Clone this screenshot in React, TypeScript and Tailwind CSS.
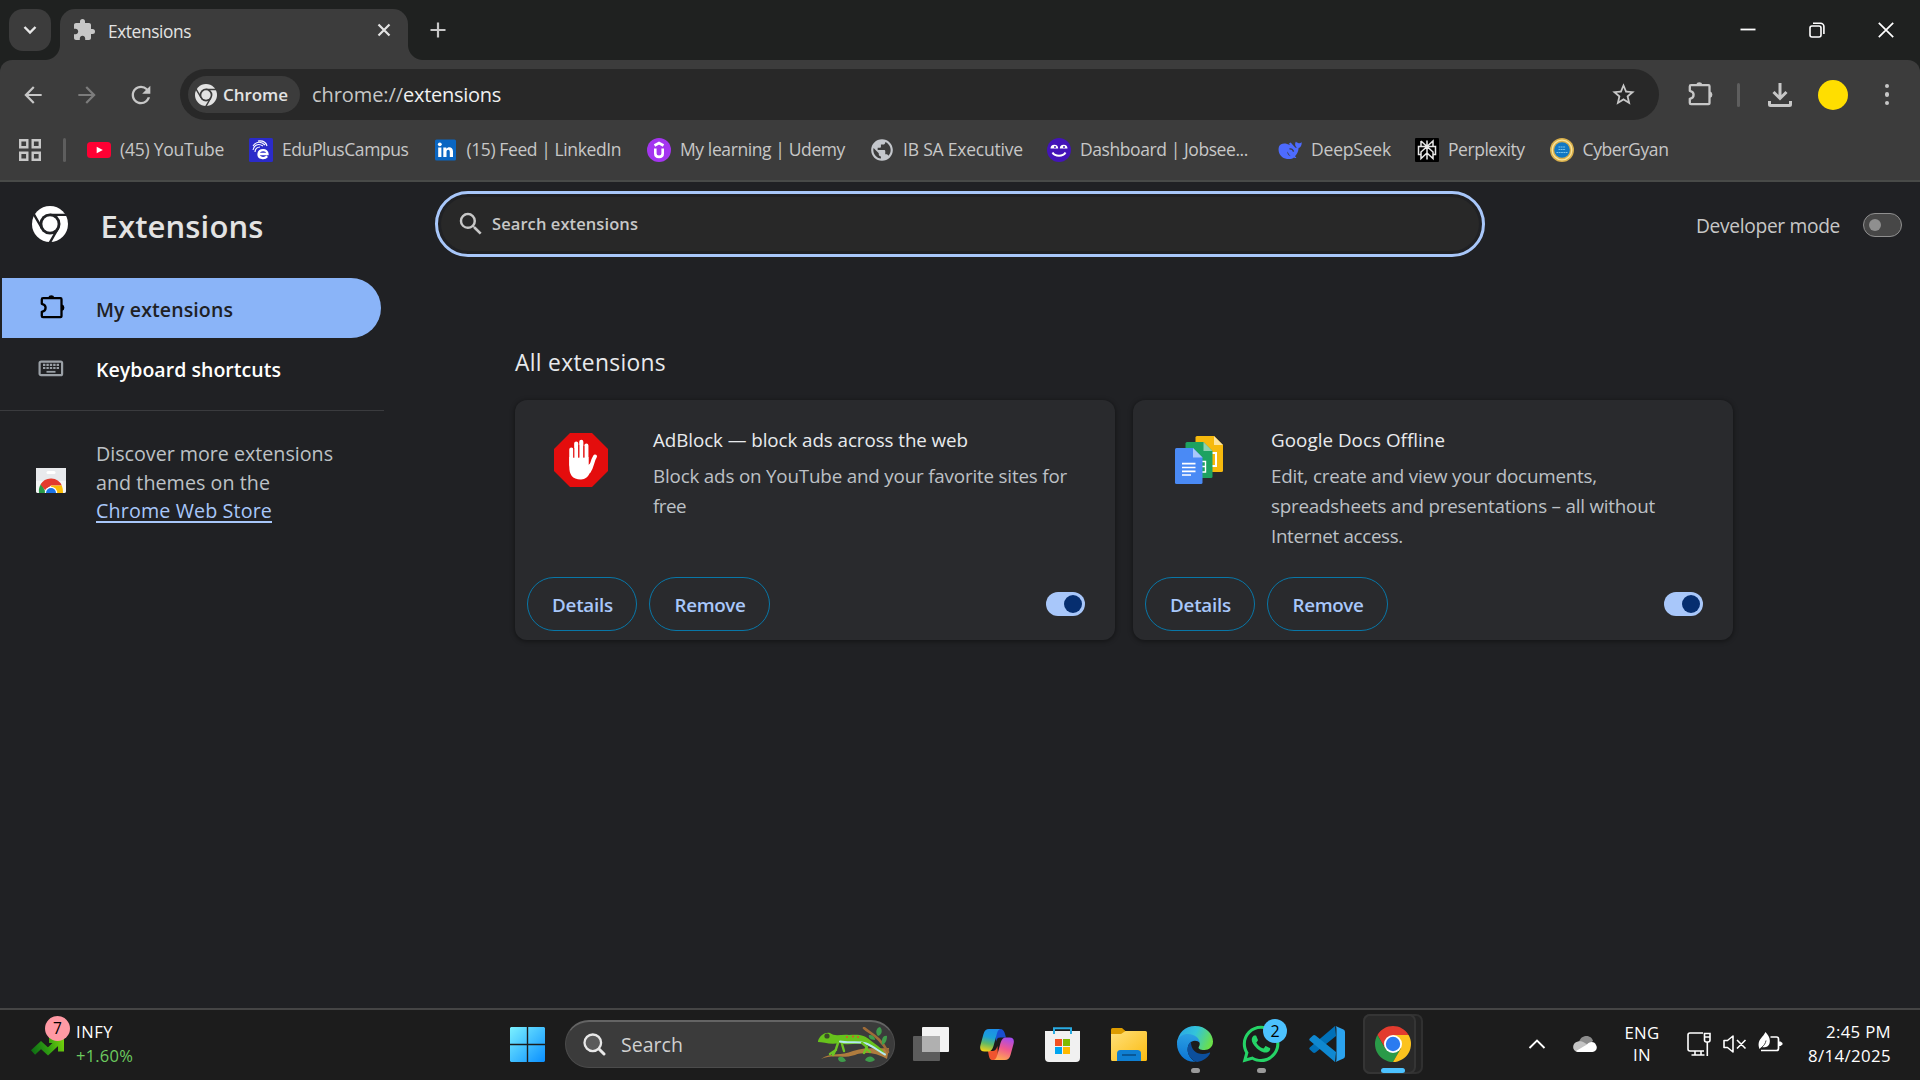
import { useLayoutEffect, useRef } from "react";
import type { ReactNode } from "react";
import { MdArrowBack, MdArrowForward, MdExtension, MdPublic, MdRefresh, MdSearch, MdStarBorder } from "react-icons/md";
import { FaWhatsapp } from "react-icons/fa";

/* A single line of text whose tracking is evened out to fill the given width. */
function Label({ w, className = "", children }: { w: number; className?: string; children: ReactNode }) {
  const box = useRef<HTMLSpanElement>(null);
  useLayoutEffect(() => {
    const el = box.current;
    if (!el) return;
    el.style.letterSpacing = "0px";
    const count = (el.textContent ?? "").length;
    const natural = el.getBoundingClientRect().width;
    if (count) el.style.letterSpacing = `${(w - natural) / count}px`;
  }, [w, children]);
  return (
    <span ref={box} className={`inline-block shrink-0 whitespace-pre ${className}`}>
      {children}
    </span>
  );
}

function PuzzleOutline({ className = "" }: { className?: string }) {
  return (
    <svg viewBox="0 0 25 25" className={className} fill="none">
      <path
        d="M3 4.200h17.500a1 1 0 0 1 1 1v17a1 1 0 0 1-1 1H3a1.200 1.200 0 0 1-1.200-1.200v-4.200c2.600-.5 3.800-2 3.800-4s-1.200-3.500-3.800-4V5.400A1.200 1.200 0 0 1 3 4.200z"
        stroke="currentColor"
        strokeWidth="2.300"
        strokeLinejoin="round"
      />
      <path d="M8.200 3.600a3.200 3.200 0 0 1 6.200 0zM22 10.600a3.200 3.200 0 0 1 0 6.200z" fill="currentColor" />
    </svg>
  );
}

/* One-colour Chrome mark; the cut colour is the surface behind it. */
function ChromeMono({ cut, className = "" }: { cut: string; className?: string }) {
  return (
    <svg viewBox="0 0 48 48" className={className}>
      <circle cx="24" cy="24" r="24" fill="currentColor" />
      <path d="M24 11.800H48M13.400 30L1.400 9.300M34.600 30L22.500 51" stroke={cut} strokeWidth="3.200" />
      <circle cx="24" cy="24" r="14" fill={cut} />
      <circle cx="24" cy="24" r="10.200" fill="currentColor" />
    </svg>
  );
}

function ChromeColor({ className = "" }: { className?: string }) {
  return (
    <svg viewBox="0 0 48 48" className={className}>
      <path fill="#e33b2e" d="M3.220 12A24 24 0 0 1 44.780 12H24L13.600 30z" />
      <path fill="#2a9a48" d="M3.220 12L13.600 30L24 36L34.390 30L24 48A24 24 0 0 1 3.220 12z" />
      <path fill="#fcc31e" d="M24 12H44.780A24 24 0 0 1 24 48L34.390 30L24 24z" />
      <circle cx="24" cy="24" r="12" fill="#fff" />
      <circle cx="24" cy="24" r="9.600" fill="#2b7bf0" />
    </svg>
  );
}

function TitleBar() {
  return (
    <div className="flex h-[60px] items-end bg-[#1f2120]">
      <button className="mb-[9px] ml-[9px] flex size-[42px] items-center justify-center rounded-[14px] bg-[#3c3c3c]">
        <svg viewBox="0 0 14 10" className="h-[10px] w-[14px]" fill="none" stroke="#e8e8e8" strokeWidth="2.400">
          <path d="M1.500 2L7 7.500L12.500 2" />
        </svg>
      </button>
      <span className="-ml-[6px] size-[15px] bg-[radial-gradient(circle_at_0_0,transparent_14.500px,#3c3c3c_15.500px)]" />
      <div className="flex h-[51px] w-[348px] items-center rounded-t-[15px] bg-[#3c3c3c] pr-[17px] pb-[9px] pl-[12px]">
        <MdExtension className="size-[24px] text-[#c7c7c7]" />
        <Label w={83} className="mt-[4px] ml-[12px] text-[17.300px] leading-[24px] text-[#e3e3e3]">Extensions</Label>
        <svg viewBox="0 0 14 14" className="ml-auto size-[14px]" fill="none" stroke="#e3e3e3" strokeWidth="2.200">
          <path d="M1.500 1.500L12.500 12.500M12.500 1.500L1.500 12.500" />
        </svg>
      </div>
      <span className="size-[15px] bg-[radial-gradient(circle_at_100%_0,transparent_14.500px,#3c3c3c_15.500px)]" />
      <svg viewBox="0 0 16 16" className="mb-[22px] ml-[7px] size-[16px]" stroke="#c7c7c7" strokeWidth="2.200">
        <path d="M8 0.500V15.500M0.500 8H15.500" />
      </svg>
      <div className="mb-[22px] ml-auto flex items-center gap-[53px] pr-[26.500px] text-white">
        <svg viewBox="0 0 16 16" className="size-[16px]" stroke="currentColor" strokeWidth="1.800">
          <path d="M0.500 7.500H15.500" />
        </svg>
        <svg viewBox="0 0 16 16" className="size-[16px]" fill="none" stroke="currentColor" strokeWidth="1.600">
          <rect x="1" y="4" width="11" height="11" rx="2" />
          <path d="M4 1.200H11.500A3.400 3.400 0 0 1 14.900 4.600V12" />
        </svg>
        <svg viewBox="0 0 16 16" className="size-[16px]" stroke="currentColor" strokeWidth="1.700">
          <path d="M0.800 0.800L15.200 15.200M15.200 0.800L0.800 15.200" />
        </svg>
      </div>
    </div>
  );
}

function Toolbar() {
  return (
    <div className="flex h-[69px] items-center rounded-t-[12px] bg-[#3c3c3c] text-[#c7c7c7]">
      <MdArrowBack className="ml-[20px] size-[26px]" />
      <MdArrowForward className="ml-[28px] size-[26px] text-[#7c7c7c]" />
      <MdRefresh className="ml-[27px] size-[28px]" />
      <div className="ml-[25px] flex h-[51px] w-[1479px] items-center rounded-full bg-[#282828] pr-[22.500px] pl-[8px]">
        <div className="flex h-[37px] w-[112px] items-center rounded-full bg-[#3c3c3c] pl-[7px] text-[#e3e3e3]">
          <ChromeMono cut="#3c3c3c" className="size-[22px]" />
          <Label w={65} className="ml-[6px] text-[17px] leading-[24px] font-semibold">Chrome</Label>
        </div>
        <Label w={91} className="ml-[12px] text-[20px] leading-[26px]">chrome://</Label>
        <Label w={98} className="text-[20px] leading-[26px] text-[#f0f0f0]">extensions</Label>
        <MdStarBorder className="ml-auto size-[27px]" />
      </div>
      <PuzzleOutline className="-mt-[2px] ml-[29px] size-[25px]" />
      <span className="ml-[24px] h-[24px] w-[3px] rounded bg-[#5e5e5e]" />
      <svg viewBox="0 0 24 24" className="ml-[28px] size-[24px]" fill="none" stroke="currentColor" strokeWidth="3">
        <path d="M12 0V14M5.500 9L12 15.500L18.500 9M1.500 18V21.500Q1.500 22.500 2.500 22.500H21.500Q22.500 22.500 22.500 21.500V18" />
      </svg>
      <span className="ml-[26px] size-[30px] rounded-full bg-[#ffde00]" />
      <div className="ml-[36.500px] flex flex-col gap-[4px]">
        <span className="size-[4.500px] rounded-full bg-[#c7c7c7]" />
        <span className="size-[4.500px] rounded-full bg-[#c7c7c7]" />
        <span className="size-[4.500px] rounded-full bg-[#c7c7c7]" />
      </div>
    </div>
  );
}

const bookmarks: { icon: ReactNode; text: string; w: number; gap: string }[] = [
  {
    text: "(45) YouTube",
    w: 104,
    gap: "ml-[21px]",
    icon: (
      <svg viewBox="0 0 24 24">
        <rect y="4" width="24" height="16" rx="3.500" fill="#ff0033" />
        <path d="M9.700 8.800L15.800 12L9.700 15.200z" fill="#fff" />
      </svg>
    ),
  },
  {
    text: "EduPlusCampus",
    w: 126.5,
    gap: "ml-[25px]",
    icon: (
      <svg viewBox="0 0 24 24" fill="none" stroke="#fff">
        <rect width="24" height="24" rx="1.500" fill="#2b2bc9" stroke="none" />
        <path d="M9.500 16H18.500C18.500 10.800 10 10.800 9.500 16C9.300 20.500 15.500 21.300 18.200 18.300" strokeWidth="2.300" />
        <path d="M4 12C5 7 9 5 14 8M4 8C7 3.500 12 3 16 7M9 3C13 2.500 17 4 18 8M6 14C6 11 8 9 11 9" strokeWidth="1.100" />
      </svg>
    ),
  },
  {
    text: "(15) Feed | LinkedIn",
    w: 154.5,
    gap: "ml-[25px]",
    icon: (
      <svg viewBox="0 0 24 24" fill="#fff">
        <rect x="1" y="1.500" width="21" height="21" rx="1.500" fill="#0a66c2" />
        <path d="M4.200 9.400H7.400V19H4.200zM9.300 9.400H12.300V10.800C14 8.300 19 8.600 19 13.300V19H15.800V14C15.800 11 12.500 11.300 12.500 14V19H9.300z" />
        <circle cx="5.800" cy="6.300" r="1.900" />
      </svg>
    ),
  },
  {
    text: "My learning | Udemy",
    w: 165,
    gap: "ml-[26px]",
    icon: (
      <svg viewBox="0 0 24 24" fill="none" stroke="#fff" strokeWidth="2.600">
        <circle cx="12" cy="12" r="12" fill="#a435f0" stroke="none" />
        <path d="M8.300 10.500V15.500C8.300 20 15.700 20 15.700 15.500V10.500M7.500 7.500L12 5L16.500 7.500" />
      </svg>
    ),
  },
  { text: "IB SA Executive", w: 120, gap: "ml-[25px]", icon: <MdPublic className="-m-px size-[26px] text-[#c4c7cc]" /> },
  {
    text: "Dashboard | Jobsee...",
    w: 168,
    gap: "ml-[24px]",
    icon: (
      <svg viewBox="0 0 24 24">
        <circle cx="12" cy="12" r="12" fill="#4314b8" />
        <path d="M3.500 10.500A3.800 3.800 0 0 1 11.200 10.500zM12.800 10.500A3.800 3.800 0 0 1 20.500 10.500z" fill="#fff" />
        <circle cx="8" cy="9" r="1" fill="#4314b8" />
        <circle cx="17" cy="9" r="1" fill="#4314b8" />
        <path d="M5.500 14.500C8 18.800 16 18.800 18.500 14.500" fill="none" stroke="#fff" strokeWidth="2" />
      </svg>
    ),
  },
  {
    text: "DeepSeek",
    w: 80,
    gap: "ml-[30px]",
    icon: (
      <svg viewBox="0 0 24 24" fill="#4d6bfe">
        <path d="M23.700 4.300C22.300 5.200 21 5.400 20.200 4.900C19.600 4.600 18.400 4.700 18 3.600C16.500 5.600 17 8 18.700 9.300C18.300 10 17.800 10.100 17 9.300C15.500 7.800 13.800 6 12.600 4.600L11 5.400L12 7C7.500 4.500 2.500 4.800 1 8.500C-.8 14.500 3 20.300 9 21C12 21.400 14.500 20.700 16 19.500C17.500 20.400 18.800 20.200 18 19.200L17 18.300C19.500 15.800 20.400 13 20.600 10C22.600 9.300 23.800 7.200 23.700 4.300z" />
        <path d="M9 13.500C10.500 14.500 11 17 12.800 18.300C10.500 18 9.500 16.300 9 13.500z" fill="#3c3c3c" opacity="0.800" />
        <path d="M11.500 11.200C13 10.200 15 11.500 15.500 13.700" fill="none" stroke="#3c3c3c" strokeWidth="1.400" />
      </svg>
    ),
  },
  {
    text: "Perplexity",
    w: 76.5,
    gap: "ml-[24px]",
    icon: (
      <svg viewBox="0 0 24 24" fill="none">
        <rect width="24" height="24" rx="1" fill="#000" />
        <path
          d="M12 2.500V21.500M6 3V8.500H18V3L12 8.500L6 3M3.500 8.500H12L6 14V20.500L12 15V8.500L18 14V20.500L12 15M6 16.500H3.500V8.500H20.500V16.500H18"
          stroke="#e8e8e8"
          strokeWidth="1.500"
        />
      </svg>
    ),
  },
  {
    text: "CyberGyan",
    w: 86,
    gap: "ml-[25px]",
    icon: (
      <svg viewBox="0 0 24 24" fill="none">
        <circle cx="12" cy="12" r="12" fill="#d9b04c" />
        <circle cx="12" cy="12" r="9.800" stroke="#fbe49a" strokeWidth="1.300" />
        <circle cx="12" cy="12" r="7.800" fill="#1278c4" />
        <path d="M8.500 9H15.500M8.500 11.500H15.500M6.500 14.500H17.500" stroke="#79c4ec" strokeWidth="1.200" strokeDasharray="1.800 .5" />
      </svg>
    ),
  },
];

function BookmarksBar() {
  return (
    <div className="flex h-[53px] items-center border-b-2 border-[#484a48] bg-[#3c3c3c] pb-[9px]">
      <svg viewBox="0 0 22 22" className="ml-[19px] size-[22px]" fill="none" stroke="#c7c7c7" strokeWidth="2.400">
        <path d="M1.200 1.200H8.300V8.300H1.200zM13.700 1.200H20.800V8.300H13.700zM1.200 13.700H8.300V20.800H1.200zM13.700 13.700H20.800V20.800H13.700z" />
      </svg>
      <span className="ml-[22px] h-[24px] w-[3px] rounded bg-[#5e5e5e]" />
      {bookmarks.map((b) => (
        <div key={b.text} className={`flex items-center ${b.gap}`}>
          <span className="size-[24px] shrink-0">{b.icon}</span>
          <Label w={b.w} className="-mt-[2px] ml-[9px] text-[17.500px] leading-[24px] text-[#c7c7c7]">{b.text}</Label>
        </div>
      ))}
    </div>
  );
}

function Sidebar() {
  return (
    <nav className="w-[384px] shrink-0">
      <a className="ml-[2px] flex h-[60px] w-[379px] items-center rounded-r-full bg-[#8ab4f8] pl-[38px]">
        <PuzzleOutline className="-mt-[4px] size-[25px] text-black" />
        <Label w={137} className="mt-[4px] ml-[31px] text-[19.500px] leading-[28px] font-semibold text-[#202124]">My extensions</Label>
      </a>
      <a className="flex h-[60px] items-center pl-[38px]">
        <svg viewBox="0 0 26 17" className="h-[17px] w-[26px]" fill="none" stroke="#9aa0a6">
          <rect x="1.600" y="1.600" width="22.500" height="13.600" rx="1.500" strokeWidth="2.200" />
          <path d="M5 4.800H21M5 8H21" strokeWidth="2.200" strokeDasharray="2.400 1" />
          <path d="M8.500 11.800H17.500" strokeWidth="1.800" />
        </svg>
        <Label w={185} className="mt-[4px] ml-[32px] text-[19.500px] leading-[28px] font-semibold text-white">Keyboard shortcuts</Label>
      </a>
      <div className="mt-[12px] h-px bg-[#3a3b3e]" />
      <div className="mt-[29px] flex pl-[36px]">
        <svg viewBox="0 0 30 25" className="mt-[28px] h-[25px] w-[30px]">
          <path d="M0 0H30V23Q30 25 28 25H2Q0 25 0 23z" fill="#e8eaed" />
          <path d="M0 13H30V23Q30 25 28 25H2Q0 25 0 23z" fill="#f4f5f6" />
          <rect x="10.500" y="3" width="9" height="3" rx="1.500" fill="#fff" />
          <path d="M3 25A12 12 0 0 1 5.500 15.500L10 25z" fill="#2a9a48" />
          <path d="M4.500 16.500A12 12 0 0 1 25.800 17.500H15L9 22z" fill="#e33b2e" />
          <path d="M15 17.500H25.800Q27.200 21 27 25H15z" fill="#fbbc04" />
          <path d="M8.800 25A6.200 6.200 0 0 1 21.200 25z" fill="#fff" />
          <path d="M10 25A5 5 0 0 1 20 25z" fill="#1a73e8" />
        </svg>
        <p className="ml-[30px] flex flex-col items-start text-[19.700px] leading-[28.600px] text-[#bdc1c6]">
          <Label w={237}>Discover more extensions</Label>
          <Label w={174}>and themes on the</Label>
          <Label w={176} className="text-[#a8c7fa] underline decoration-2 underline-offset-[3px]">Chrome Web Store</Label>
        </p>
      </div>
    </nav>
  );
}

function AdBlockIcon() {
  return (
    <svg viewBox="0 0 54 54" className="size-[54px]">
      <path d="M16 0H38L54 16V38L38 54H16L0 38V16z" fill="#e40d0d" />
      <g stroke="#fff" strokeLinecap="round" fill="none">
        <path d="M17.300 16.500V32M22.200 10.500V30M27.300 8.800V30M32.400 12.500V32" strokeWidth="4.100" />
        <path d="M41 23.500C38 28 38.500 33 35 38" strokeWidth="4" />
      </g>
      <path d="M15.300 24H34.500V32L39.500 27C38.500 34 36 46.500 27 46.500C18 46.500 15.300 41 15.300 34z" fill="#fff" />
      <path d="M19.800 15V25M24.800 12V25M29.900 13V25" stroke="#e40d0d" strokeWidth="0.900" />
    </svg>
  );
}

function DocsIcon() {
  return (
    <svg viewBox="0 0 48 48" className="size-[48px]">
      <path d="M22 0H39L48 9V34.500Q48 36 46.500 36H20.500V1.500Q20.500 0 22 0z" fill="#f6b90d" />
      <path d="M39 0L48 9H39z" fill="#fde39b" />
      <path d="M36 17H41V30H36" fill="none" stroke="#fff" strokeWidth="2" />
      <path d="M12 6H28.500L37.500 15V40.500Q37.500 42 36 42H10.500V7.500Q10.500 6 12 6z" fill="#1da261" />
      <path d="M28.500 6L37.500 15H28.500z" fill="#8ed1b0" />
      <path d="M24 25.500H30.500V36H24M24 30.500H30.500" fill="none" stroke="#fff" strokeWidth="1.400" />
      <path d="M1.500 12H18L27.500 21.500V46.500Q27.500 48 26 48H1.500Q0 48 0 46.500V13.500Q0 12 1.500 12z" fill="#4a8af5" />
      <path d="M18 12L27.500 21.500H18z" fill="#a9c8fb" />
      <path d="M7 27.700H20.500M7 31.500H20.500M7 35.300H20.500M7 39H16" stroke="#fff" strokeWidth="1.700" />
    </svg>
  );
}

function Card({ icon, title, lines }: { icon: ReactNode; title: [string, number]; lines: [string, number][] }) {
  return (
    <article className="flex h-[240px] w-[600px] flex-col rounded-[12px] bg-[#292a2d] shadow-[0_1px_4px_1px_rgba(0,0,0,0.35)]">
      <div className="flex h-[177px] pt-[25px]">
        <div className="flex w-[138px] justify-center pt-[8px] pr-[6px]">{icon}</div>
        <div className="flex flex-col items-start text-[18.800px] leading-[30px] text-[#bdc1c6]">
          <Label w={title[1]} className="mb-[6px] text-[#e8eaed]">{title[0]}</Label>
          {lines.map(([text, w]) => (
            <Label key={text} w={w}>{text}</Label>
          ))}
        </div>
      </div>
      <div className="flex items-center pr-[30px] pl-[12px] text-[18.800px] leading-[28px] font-semibold text-[#a8c7fa]">
        <button className="flex h-[54px] w-[110px] items-center justify-center rounded-full border border-[#0877a8] pt-px pl-px">
          <Label w={61}>Details</Label>
        </button>
        <button className="ml-[12px] flex h-[54px] w-[121px] items-center justify-center rounded-full border border-[#0877a8] pt-px pl-px">
          <Label w={71}>Remove</Label>
        </button>
        <span className="ml-auto flex h-[24px] w-[39px] items-center justify-end rounded-full bg-[#a8c7fa] pr-[3px]">
          <span className="size-[18px] rounded-full bg-[#062e6f]" />
        </span>
      </div>
    </article>
  );
}

function Page() {
  return (
    <main className="flex flex-1 flex-col bg-[#202124]">
      <header className="flex h-[96px] items-start">
        <ChromeMono cut="#202124" className="mt-[24px] ml-[32px] size-[36px] text-white" />
        <h1 className="mt-[24px] ml-[32.500px] w-[334.500px] text-[31px] leading-[40px] font-semibold text-[#e3e3e3]">
          <Label w={163}>Extensions</Label>
        </h1>
        <div className="mt-[9px] h-[66px] w-[1050px] rounded-full border-[3px] border-[#a8c7fa] p-[3px]">
          <div className="flex h-full items-center rounded-full bg-[#282828] pl-[15px] text-[#c7c7c7]">
            <MdSearch className="size-[30px]" />
            <Label w={146} className="ml-[6px] text-[16.500px] leading-[24px] font-semibold">Search extensions</Label>
          </div>
        </div>
        <div className="mt-[27px] ml-auto flex items-center pr-[18px]">
          <Label w={144} className="mt-[3px] text-[19.200px] leading-[28px] text-[#c7c7c7]">Developer mode</Label>
          <span className="ml-[23px] flex h-[24px] w-[39px] items-center rounded-full border border-[#8f8f8f] bg-[#474747] pl-[5px]">
            <span className="size-[12px] rounded-full bg-[#8f8f8f]" />
          </span>
        </div>
      </header>
      <div className="flex flex-1">
        <Sidebar />
        <section className="pt-[69px] pl-[131px]">
          <h2 className="text-[22.800px] leading-[32px] text-[#e8eaed]">
            <Label w={151}>All extensions</Label>
          </h2>
          <div className="mt-[21px] flex gap-[18px]">
            <Card
              icon={<AdBlockIcon />}
              title={["AdBlock — block ads across the web", 315]}
              lines={[["Block ads on YouTube and your favorite sites for", 414], ["free", 33]]}
            />
            <Card
              icon={<div className="pt-[3px]"><DocsIcon /></div>}
              title={["Google Docs Offline", 174]}
              lines={[["Edit, create and view your documents,", 326], ["spreadsheets and presentations – all without", 384], ["Internet access.", 132]]}
            />
          </div>
        </section>
      </div>
    </main>
  );
}

function Lizard() {
  return (
    <svg viewBox="0 0 73 36" className="h-[36px] w-[73px]" fill="none" strokeLinecap="round">
      <path d="M4 32C14 25 24 29 36 24C48 20 58 22 72 21L70 32C58 25 46 25 38 28C26 32 15 27 4 32z" fill="#b07c3e" />
      <path d="M47 1C54 7 63 10 71 25" stroke="#a06c38" strokeWidth="2.600" />
      <path d="M61 9C57 4 61 0 63 0C66 3 65 8 61 9zM65 18C64 11 67 8 70 9C70 14 68 17 65 18zM58 13C53 13 51 10 52 8C56 8 58 10 58 13z" fill="#3f9c4b" />
      <path d="M21 31C24 28 28 31 29 34C25 36 21 35 21 31zM48 33C51 28 56 29 58 33C54 36 50 35 48 33z" fill="#3f9c4b" />
      <path d="M1 14C3 8 8 5 13 6C18 10 24 7 32 8C42 7 48 8 53 13C58 17 64 20 69 28C60 25 56 20 50 18C40 15 32 19 22 16C14 18 6 15 1 15z" fill="#67c21c" />
      <path d="M23 14.500C32 16.500 42 14 49 16.500C57 19.500 61 24 68 27.500" stroke="#b5e8f2" strokeWidth="2" />
      <path d="M21 16L19 22L16 28M19 23L13 27M25 17L27 24M45 16L50 20L47 26M49 21L53 25" stroke="#6cc424" strokeWidth="2.400" />
      <circle cx="10" cy="9" r="2.600" fill="#3d4a2a" />
      <circle cx="30" cy="10" r="1" fill="#e2502c" />
      <circle cx="36" cy="9.500" r="1" fill="#e2502c" />
      <circle cx="41" cy="10" r="1" fill="#e2502c" />
    </svg>
  );
}

function StartIcon() {
  return (
    <svg viewBox="0 0 35 35" className="size-[35px]">
      <defs>
        <linearGradient id="start" gradientUnits="userSpaceOnUse" x1="0" y1="0" x2="35" y2="35">
          <stop stopColor="#7bf1ff" />
          <stop offset="1" stopColor="#0a8fff" />
        </linearGradient>
      </defs>
      <path d="M1 0H16.800V16.800H0V1zM18.200 0H34L35 1V16.800H18.200zM0 18.200H16.800V35H1L0 34zM18.200 18.200H35V34L34 35H18.200z" fill="url(#start)" />
    </svg>
  );
}

function CopilotIcon() {
  return (
    <svg viewBox="0 0 34 31" className="h-[31px] w-[34px]">
      <defs>
        <linearGradient id="cpA" x1="0.500" y1="0" x2="0.300" y2="1">
          <stop stopColor="#1d8fe8" />
          <stop offset="0.350" stopColor="#1ba0d8" />
          <stop offset="0.650" stopColor="#5fb968" />
          <stop offset="1" stopColor="#f3d216" />
        </linearGradient>
        <linearGradient id="cpB" x1="0.700" y1="0" x2="0.400" y2="1">
          <stop stopColor="#a44bf0" />
          <stop offset="0.500" stopColor="#f0588f" />
          <stop offset="1" stopColor="#ffa553" />
        </linearGradient>
      </defs>
      <path d="M15 0H20C23 0 24.300 2 25 5L26 8.500H21C18 8.500 17 9 16 13z" fill="#1a4fd0" />
      <path d="M18 31H13C10 31 9.300 29 8.700 26L8 22H12C15 22 16 21 17.500 17z" fill="#f0542f" />
      <path d="M9 0H20C17.800 1 17.300 3 16.500 6L13.500 17C12.500 20.500 11 22.500 8 22.500H4.500C.5 22.500 -.5 20 .5 16L3.500 5C4.500 1.500 6 0 9 0z" fill="url(#cpA)" />
      <path d="M25 31H14C16.200 30 16.700 28 17.500 25L20.500 14C21.500 10.500 23 8.500 26 8.500H29.500C33.500 8.500 34.500 11 33.500 15L30.500 26C29.500 29.500 28 31 25 31z" fill="url(#cpB)" />
    </svg>
  );
}

function StoreIcon() {
  return (
    <svg viewBox="0 0 35 35" className="size-[35px]">
      <path d="M0 4H35V31Q35 35 31 35H4Q0 35 0 31z" fill="#f1f1f1" />
      <path d="M9 7V1.300H26V7" fill="none" stroke="#29abe2" strokeWidth="2" />
      <path d="M10 12H17V19H10z" fill="#f25022" />
      <path d="M18 12H25V19H18z" fill="#7fba00" />
      <path d="M10 20H17V27H10z" fill="#00a4ef" />
      <path d="M18 20H25V27H18z" fill="#ffb900" />
    </svg>
  );
}

function FolderIcon() {
  return (
    <svg viewBox="0 0 36 33" className="h-[33px] w-[36px]">
      <defs>
        <linearGradient id="folder" x1="0" y1="0" x2="1" y2="1">
          <stop stopColor="#ffe07a" />
          <stop offset="1" stopColor="#fbbb10" />
        </linearGradient>
      </defs>
      <path d="M1.500 0H11L15 3.500L12 8H0V1.500Q0 0 1.500 0z" fill="#dd9c00" />
      <path d="M0 6H10L14.500 3H34.500Q36 3 36 4.500V31.500Q36 33 34.500 33H1.500Q0 33 0 31.500z" fill="url(#folder)" />
      <path d="M6 33V25.500Q6 22 9.500 22H26.500Q30 22 30 25.500V33z" fill="#0f7fd2" />
      <path d="M11 27H25" stroke="#0a5490" strokeWidth="1.800" />
    </svg>
  );
}

function EdgeIcon() {
  return (
    <svg viewBox="0 0 36 36" className="size-[36px]">
      <defs>
        <linearGradient id="edA" x1="0" y1="0.200" x2="1" y2="0.500">
          <stop stopColor="#2aa5e6" />
          <stop offset="0.500" stopColor="#33c4da" />
          <stop offset="1" stopColor="#6be04a" />
        </linearGradient>
        <linearGradient id="edB" x1="0.500" y1="0" x2="0.400" y2="1">
          <stop stopColor="#2ba0e3" />
          <stop offset="1" stopColor="#0b74d4" />
        </linearGradient>
      </defs>
      <path d="M0 17C1 7 8 0 18 0C29 0 36 8 36 15.500C36 21 32 24 27.500 24C23 24 20.500 22.500 22 20.500C24 17.500 22 13 17 12z" fill="url(#edA)" />
      <path d="M0 18C0 10.500 6 8 11 8C17 8 22.500 11.500 22.800 17C20 13.500 14 14 11.500 19C9 25 12 32 18.500 35.800C8 36.500 0 28 0 18z" fill="url(#edB)" />
      <path d="M14 15.500C9.500 19 9.500 27 13.500 31.500C17 35.500 20 36 20 36C26 35.200 31 31.500 33 27.500C33.400 26.600 32.800 26.300 32 26.700C23 30.500 13.500 26 14 15.500z" fill="#0c4f9c" />
    </svg>
  );
}

function VsCodeIcon() {
  return (
    <svg viewBox="0 0 36 36" className="size-[36px]">
      <path d="M27 10L6.500 26.500Q5 27.500 3.700 26.300L1 23.800Q-.5 22.500 1 21.200L26 0z" fill="#0070b8" />
      <path d="M27 26L6.500 9.500Q5 8.500 3.700 9.700L1 12.200Q-.5 13.500 1 14.800L26 36z" fill="#0f88d1" />
      <path d="M26.500 0L34.500 3.500Q36 4.300 36 6V30Q36 31.700 34.500 32.500L26.500 36Q27.500 35 27.500 33V3Q27.500 1 26.500 0z" fill="#2ba3ef" />
    </svg>
  );
}

function Taskbar() {
  return (
    <footer className="flex h-[72px] items-center border-t-2 border-[#454545] bg-[#1c1c1c] pb-[2px] text-white">
      <div className="relative h-[36px] w-[46px]">
        <svg viewBox="0 0 33 22" className="absolute top-[11px] left-[31px] h-[22px] w-[33px]" fill="none">
          <defs>
            <linearGradient id="trend" gradientUnits="userSpaceOnUse" x1="0" y1="15" x2="33" y2="5">
              <stop stopColor="#0c6b14" />
              <stop offset="0.500" stopColor="#2f9c12" />
              <stop offset="1" stopColor="#74d00c" />
            </linearGradient>
          </defs>
          <path d="M2 15.500L10 8L17 14.500L29 3M30 14.500V3H18" stroke="url(#trend)" strokeWidth="6" />
        </svg>
        <span className="absolute -top-[10px] left-[45px] flex size-[25px] items-center justify-center rounded-full bg-[#ff99a4] text-[15.500px] leading-none text-black">7</span>
      </div>
      <div className="ml-[30px] flex w-[434px] flex-col items-start text-[16.500px] leading-[24px]">
        <Label w={37}>INFY</Label>
        <Label w={57} className="text-[#6ccb5f]">+1.60%</Label>
      </div>
      <StartIcon />
      <div className="ml-[20px] flex h-[48px] w-[330px] items-center rounded-full border border-t-2 border-[#4b4b4b] border-t-[#646464] bg-[#3b3b3b] pl-[17px]">
        <svg viewBox="0 0 23 23" className="size-[23px]" fill="none" stroke="#e8e8e8">
          <circle cx="9.800" cy="9.800" r="8.300" strokeWidth="2.300" fill="#5a5a5a" />
          <path d="M16 16L21 21" strokeWidth="3" strokeLinecap="round" />
        </svg>
        <Label w={62} className="ml-[15px] text-[19.500px] leading-[26px] text-[#d0d0d0]">Search</Label>
        <div className="ml-auto pr-[4px]"><Lizard /></div>
      </div>
      <svg viewBox="0 0 36 34" className="ml-[18px] h-[34px] w-[36px]">
        <rect x="9" width="27" height="25" rx="1" fill="#f3f3f3" />
        <rect y="9" width="27" height="25" rx="1" fill="#5c5c5c" />
        <path d="M9 9H27V25H9z" fill="#b0b0b0" />
      </svg>
      <div className="ml-[31px]"><CopilotIcon /></div>
      <div className="ml-[31px]"><StoreIcon /></div>
      <div className="ml-[31px]"><FolderIcon /></div>
      <div className="relative ml-[30px]">
        <EdgeIcon />
        <span className="absolute top-[42px] left-[14px] h-[5px] w-[9px] rounded-full bg-[#9a9a9a]" />
      </div>
      <div className="relative ml-[30px]">
        <FaWhatsapp className="-m-[3px] size-[42px] text-[#25d366]" />
        <span className="absolute top-[42px] left-[14px] h-[5px] w-[9px] rounded-full bg-[#9a9a9a]" />
        <span className="absolute -top-[7px] left-[20px] flex size-[24px] items-center justify-center rounded-full bg-[#4cc2ff] text-[16px] leading-none text-black">2</span>
      </div>
      <div className="ml-[30px]"><VsCodeIcon /></div>
      <div className="ml-[18px] flex h-[60px] w-[60px] rounded-[7px] border-2 border-[#303030] bg-[#232323]">
        <div className="relative -m-[2px] flex w-[53px] items-center justify-center rounded-[7px] border-2 border-[#353535] bg-[#292929]">
          <ChromeColor className="ml-[6px] size-[36px] shrink-0" />
          <span className="absolute top-[52px] left-[16px] h-[5px] w-[24px] rounded-full bg-[#4cc2ff]" />
        </div>
      </div>
      <svg viewBox="0 0 18 10" className="ml-auto h-[10px] w-[18px]" fill="none" stroke="#fff" strokeWidth="1.900">
        <path d="M1.500 9L9 1.500L16.500 9" />
      </svg>
      <svg viewBox="0 0 24 16" className="ml-[27px] h-[16px] w-[24px]">
        <path d="M6 6C7 1.500 11 0 13.500 0C17 0 19.500 2.500 20 5L12 11z" fill="#8c8c8c" />
        <path d="M5 16C-1.500 15.500 -1.500 6.500 5 5.500C9 4.800 11 6.500 20 12L10 16z" fill="#c4c4c4" />
        <path d="M3 15L14 8.500C16 5 22 5 23 9C25 12 23 16 19.500 16H5Q4 16 3 15z" fill="#fff" />
      </svg>
      <div className="ml-[28px] flex w-[34px] flex-col items-center text-[16.800px] leading-[22.500px]">
        <Label w={35}>ENG</Label>
        <Label w={18}>IN</Label>
      </div>
      <svg viewBox="0 0 24 24" className="ml-[28px] size-[24px]" fill="none" stroke="#fff" strokeWidth="1.600">
        <path d="M16 1H3Q1 1 1 3V17Q1 19 3 19H17M8 19V22.500M14 19V22.500M4.500 23H17.500" />
        <path d="M17.500 1.500H23V8Q23 10 21 10H19.500Q17.500 10 17.500 8zM17.500 5H23M20.300 10V24" />
      </svg>
      <svg viewBox="0 0 24 18" className="ml-[12px] h-[18px] w-[24px]" fill="none" stroke="#fff" strokeWidth="1.600">
        <path d="M1 5.500H4.500L10 1V17L4.500 12.500H1zM14 5L22.500 13.500M22.500 5L14 13.500" strokeLinejoin="round" />
      </svg>
      <svg viewBox="0 0 25 20" className="mt-[-4px] ml-[11px] h-[20px] w-[25px]" fill="none" stroke="#fff">
        <path d="M12.500 5H18.500Q20.500 5 20.500 7V16.500Q20.500 18.500 18.500 18.500H3" strokeWidth="1.700" />
        <path d="M1 15.500C-1 8 4.500 6 7.500 0C10 3 12.500 6 11.700 10.500C11 15 7 16 3.500 15L1.500 17z" fill="#fff" stroke="none" />
        <path d="M4 15C6 13.500 7.500 11.500 8 8.500" stroke="#1c1c1c" strokeWidth="0.800" />
        <path d="M21 9.500H22.500L24.500 11V12.500L22.500 14H21z" fill="#fff" stroke="none" />
      </svg>
      <div className="mr-[29px] ml-[25px] flex w-[83px] flex-col items-end text-[16.800px] leading-[24px]">
        <Label w={65}>2:45 PM</Label>
        <Label w={83}>8/14/2025</Label>
      </div>
    </footer>
  );
}

export default function App() {
  return (
    <div className="flex h-[1080px] w-[1920px] flex-col overflow-hidden bg-[#1f2120] font-['Open_Sans',sans-serif]">
      <TitleBar />
      <Toolbar />
      <BookmarksBar />
      <Page />
      <Taskbar />
    </div>
  );
}
